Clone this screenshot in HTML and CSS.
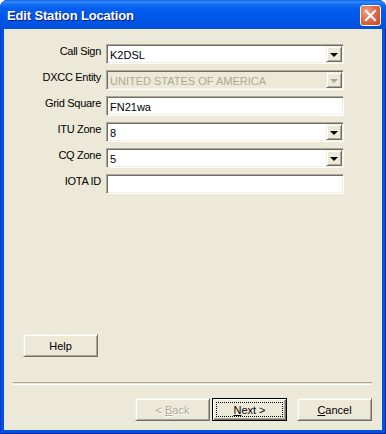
FILE: index.html
```html
<!DOCTYPE html>
<html>
<head>
<meta charset="utf-8">
<link rel="stylesheet" href="styles.css">
</head>
<body>
<div class="window">
  <div class="titlebar">
    <span class="title">Edit Station Location</span>
    <span class="close">
      <svg width="13" height="13" viewBox="0 0 13 13"><path d="M2 2 L11 11 M11 2 L2 11" stroke="#fff" stroke-width="2.2" stroke-linecap="square"/></svg>
    </span>
  </div>
  <div class="client">
    <div class="form">
      <div class="lbl">Call Sign</div>
      <div class="field"><span class="val">K2DSL</span><span class="drop"><i class="arrow"></i></span></div>
      <div class="lbl">DXCC Entity</div>
      <div class="field disabled"><span class="val">UNITED STATES OF AMERICA</span><span class="drop"><i class="arrow"></i></span></div>
      <div class="lbl">Grid Square</div>
      <div class="field"><span class="val">FN21wa</span></div>
      <div class="lbl">ITU Zone</div>
      <div class="field"><span class="val">8</span><span class="drop"><i class="arrow"></i></span></div>
      <div class="lbl">CQ Zone</div>
      <div class="field"><span class="val">5</span><span class="drop"><i class="arrow"></i></span></div>
      <div class="lbl">IOTA ID</div>
      <div class="field"><span class="val"></span></div>
    </div>
    <div class="help-row"><div class="btn">Help</div></div>
    <div class="sep"></div>
    <div class="nav">
      <div class="btn disabled"><span class="txt">&lt; <u>B</u>ack</span></div>
      <div class="btn default"><span class="focus"><u>N</u>ext &gt;</span></div>
      <div class="btn cancel"><span class="txt"><u>C</u>ancel</span></div>
    </div>
  </div>
</div>
</body>
</html>
```
FILE: styles.css
```css
html, body {
  margin: 0;
  padding: 0;
  width: 386px;
  height: 434px;
  overflow: hidden;
  background: #fff;
}
.window {
  width: 386px;
  height: 434px;
  box-sizing: border-box;
  background: #0054E3;
  border-radius: 8px 8px 0 0;
  display: flex;
  flex-direction: column;
  box-shadow: inset 1px 0 0 #0831D9, inset -1px 0 0 #001EA0, inset 0 -1px 0 #001EA0;
  font-family: "Liberation Sans", Arial, sans-serif;
  font-size: 11px;
}
.titlebar {
  height: 29px;
  flex: none;
  display: flex;
  align-items: center;
  padding: 0 5px 0 7px;
  border-radius: 8px 8px 0 0;
  background: linear-gradient(to bottom, #0A5FEC 0px, #3B8CF7 2px, #1470F6 4px, #0660EE 8px, #0058EE 14px, #0055E5 22px, #0150D8 29px);
}
.title {
  flex: 1;
  color: #fff;
  font-weight: bold;
  font-size: 13px;
  letter-spacing: -0.15px;
  text-shadow: 1px 1px 0 #0A1883;
  padding-top: 1px;
}
.close {
  width: 19px;
  height: 19px;
  border: 1px solid #fff;
  border-radius: 3px;
  background: radial-gradient(circle at 30% 30%, #F0A48A 0%, #E2704F 40%, #C94420 100%);
  display: flex;
  align-items: center;
  justify-content: center;
  margin-top: 1px;
}
.client {
  flex: 1;
  margin: 0 4px 4px 4px;
  background: #ECE9D8;
  display: flex;
  flex-direction: column;
  padding-bottom: 9px;
}
.form {
  margin-top: 15px;
  display: grid;
  grid-template-columns: 97px 238px;
  grid-auto-rows: 20px;
  column-gap: 5px;
  row-gap: 6px;
}
.lbl {
  text-align: right;
  color: #000;
  padding-top: 1px;
  letter-spacing: -0.3px;
}
.field {
  box-sizing: border-box;
  height: 20px;
  background: #fff;
  border-top: 1px solid #ACA899;
  border-left: 1px solid #ACA899;
  border-bottom: 1px solid #fff;
  border-right: 1px solid #fff;
  box-shadow: inset 1px 1px 0 #716F64, inset -1px -1px 0 #F1EFE2;
  display: flex;
  align-items: center;
  padding: 1px 1px 1px 2px;
}
.field.disabled {
  background: #ECE9D8;
}
.val {
  flex: 1;
  color: #000;
  padding-left: 1px;
  padding-top: 1px;
  white-space: nowrap;
  overflow: hidden;
}
.disabled .val {
  color: #ACA899;
}
.drop {
  width: 16px;
  height: 16px;
  box-sizing: border-box;
  background: #ECE9D8;
  border-top: 1px solid #F1EFE2;
  border-left: 1px solid #F1EFE2;
  border-bottom: 1px solid #716F64;
  border-right: 1px solid #716F64;
  box-shadow: inset 1px 1px 0 #fff, inset -1px -1px 0 #ACA899;
  display: flex;
  align-items: center;
  justify-content: center;
}
.arrow {
  width: 0;
  height: 0;
  border-left: 4px solid transparent;
  border-right: 4px solid transparent;
  border-top: 4px solid #000;
  margin-top: 1px;
}
.disabled .arrow {
  border-top-color: #ACA899;
}
.help-row {
  margin-top: auto;
  padding-left: 19px;
  display: flex;
}
.btn {
  box-sizing: border-box;
  width: 75px;
  height: 23px;
  background: #ECE9D8;
  border-top: 1px solid #F1EFE2;
  border-left: 1px solid #F1EFE2;
  border-bottom: 1px solid #716F64;
  border-right: 1px solid #716F64;
  box-shadow: inset 1px 1px 0 #fff, inset -1px -1px 0 #ACA899;
  display: flex;
  align-items: center;
  justify-content: center;
  color: #000;
}
.btn u {
  text-decoration: underline;
  text-underline-offset: 1px;
}
.sep {
  margin: 25px 10px 0 9px;
  height: 1px;
  border-top: 1px solid #ACA899;
  border-bottom: 1px solid #fff;
}
.nav {
  margin-top: 13px;
  display: flex;
  justify-content: flex-end;
  padding-right: 10px;
}
.btn.disabled {
  color: #ACA899;
  text-shadow: 1px 1px 0 #fff;
}
.btn.default {
  margin-left: 2px;
  border: 1px solid #000;
  box-shadow: inset 1px 1px 0 #fff, inset -1px -1px 0 #716F64, inset -2px -2px 0 #ACA899;
}
.focus {
  box-sizing: border-box;
  width: 67px;
  height: 15px;
  border: 1px dotted #000;
  display: flex;
  align-items: center;
  justify-content: center;
}
.btn.cancel {
  margin-left: 10px;
}
```
